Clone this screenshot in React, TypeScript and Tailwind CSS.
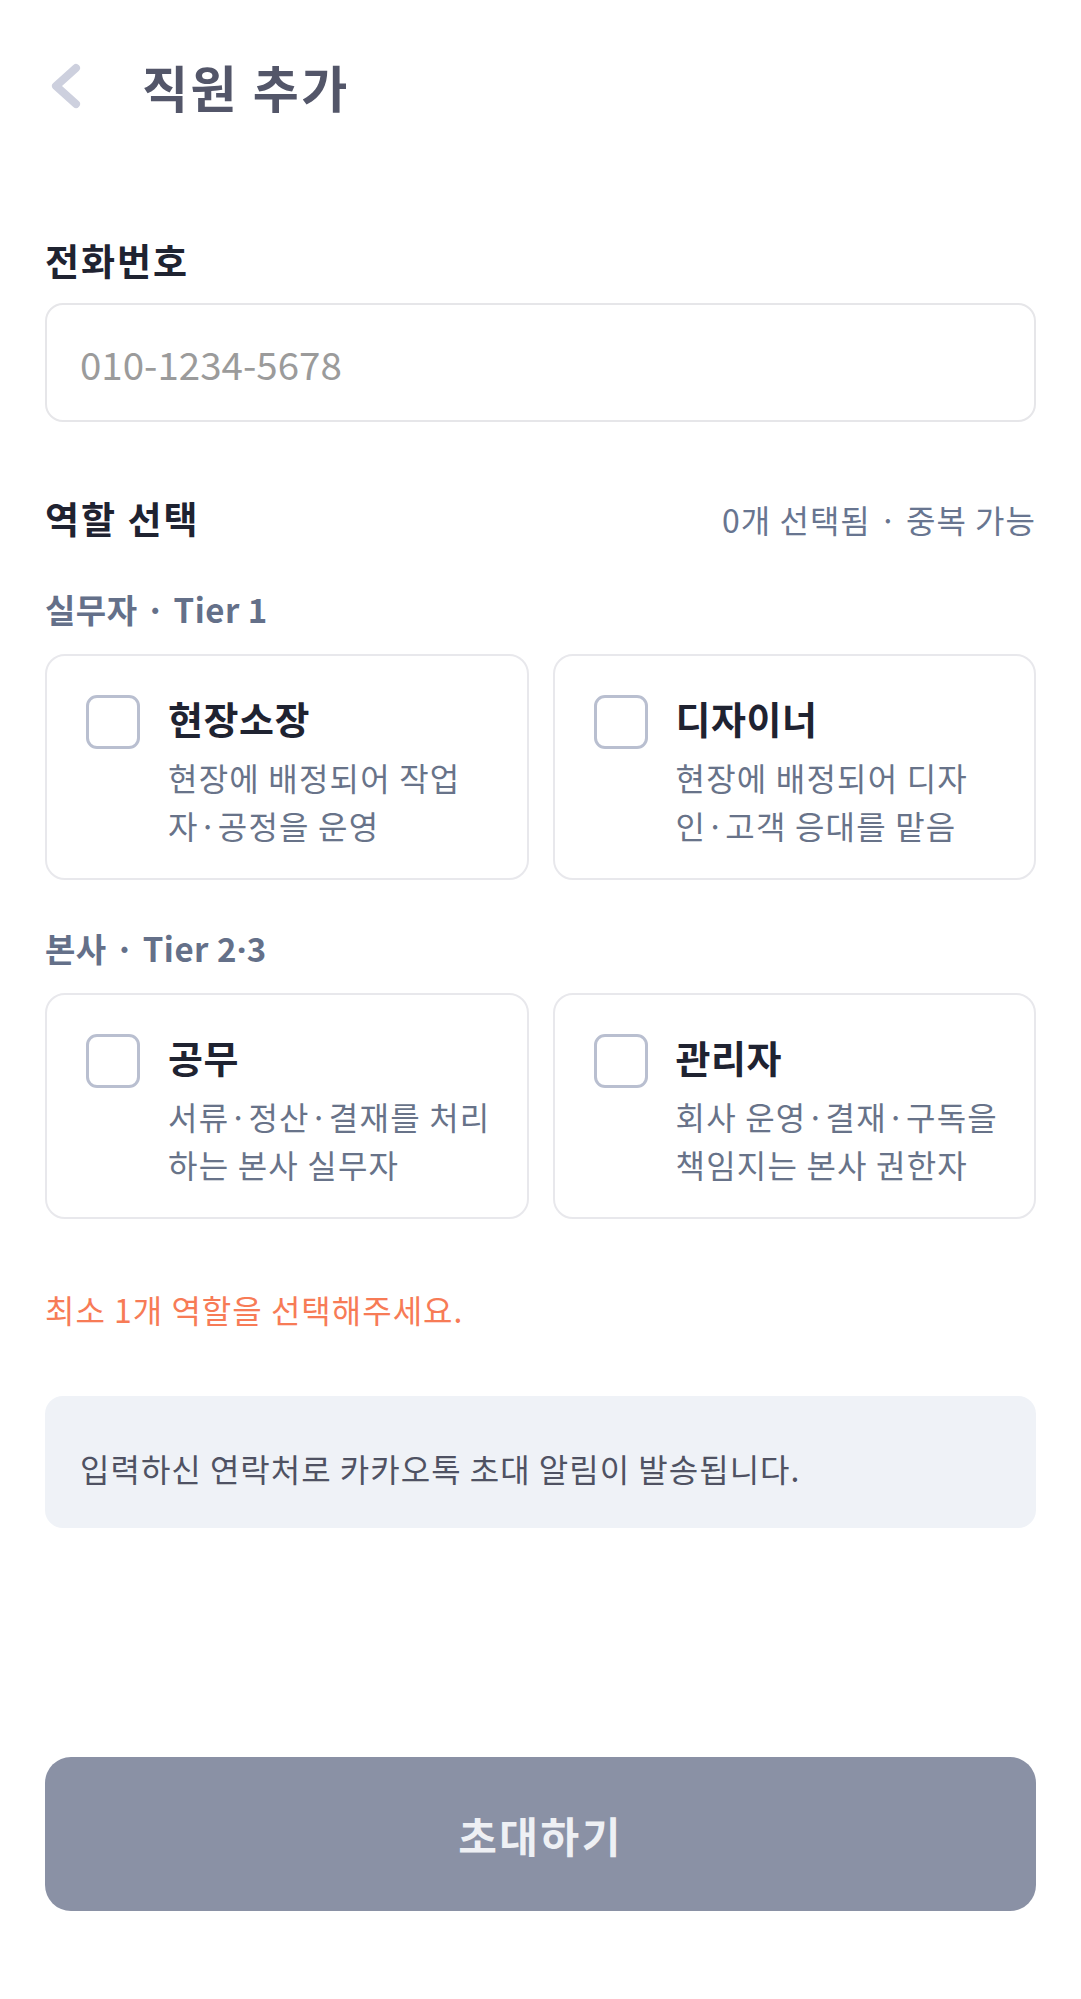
import React from "react";

type Role = { title: string; lines: [string, string] };

const tier1: Role[] = [
  { title: "현장소장", lines: ["현장에 배정되어 작업", "자·공정을 운영"] },
  { title: "디자이너", lines: ["현장에 배정되어 디자", "인·고객 응대를 맡음"] },
];
const tier2: Role[] = [
  { title: "공무", lines: ["서류·정산·결재를 처리", "하는 본사 실무자"] },
  { title: "관리자", lines: ["회사 운영·결재·구독을", "책임지는 본사 권한자"] },
];

function RoleCard({ role }: { role: Role }) {
  return (
    <button
      type="button"
      className="flex items-start text-left rounded-[20px] border-2 border-[#e8e8ec] bg-white pt-[39px] pl-[39px] pr-[20px] pb-[29px]"
    >
      <span className="shrink-0 w-[54px] h-[54px] rounded-[11px] border-[3px] border-[#b9bfd0] bg-white" />
      <span className="ml-[28px] flex flex-col">
        <span className="h-[46px] leading-[46px] text-[38px] tracking-[0.5px] font-bold text-[#1f2331]">{role.title}</span>
        <span className="mt-[12px] flex flex-col text-[32px] tracking-[1.2px] leading-[48px] text-[#687389] whitespace-nowrap">
          <span>{role.lines[0]}</span>
          <span>{role.lines[1]}</span>
        </span>
      </span>
    </button>
  );
}

export default function App() {
  return (
    <div className="min-h-[1999px] w-full bg-white flex flex-col px-[45px] font-['Noto_Sans_CJK_KR','Noto_Sans',sans-serif]">
      {/* Header */}
      <div className="h-[172px] flex items-center">
        <svg width="40" height="60" viewBox="0 0 40 60" className="shrink-0">
          <polyline
            points="31,12 11,30 31,48"
            fill="none"
            stroke="#cdd0de"
            strokeWidth="8"
            strokeLinecap="round"
            strokeLinejoin="round"
          />
        </svg>
        <h1 className="ml-[57px] text-[50px] tracking-[2.5px] leading-none font-bold text-[#535669]">직원 추가</h1>
      </div>

      {/* Phone */}
      <div className="mt-[62px] h-[52px] leading-[52px] text-[37px] tracking-[2px] font-bold text-[#1f2331]">전화번호</div>
      <input
        type="text"
        placeholder="010-1234-5678"
        className="mt-[17px] h-[119px] w-full rounded-[18px] border-2 border-[#e6e6e9] pl-[33px] text-[38.5px] text-[#1f2331] placeholder:text-[#9b9b9b] outline-none"
      />

      {/* Role selection */}
      <div className="mt-[71px] h-[52px] flex items-center justify-between">
        <span className="text-[37px] tracking-[2px] font-bold text-[#1f2331]">역할 선택</span>
        <span className="text-[32px] tracking-[1px] text-[#687590]">0개 선택됨 · 중복 가능</span>
      </div>

      <div className="mt-[40px] h-[48px] leading-[48px] text-[33px] tracking-[0.5px] font-bold text-[#647089]">실무자 · Tier 1</div>
      <div className="mt-[21px] grid grid-cols-2 gap-[24px]">
        {tier1.map((r) => (
          <RoleCard key={r.title} role={r} />
        ))}
      </div>

      <div className="mt-[44px] h-[48px] leading-[48px] text-[33px] tracking-[0.5px] font-bold text-[#647089]">
        본사 · Tier 2<span className="font-['Noto_Sans',sans-serif]">·</span>3
      </div>
      <div className="mt-[21px] grid grid-cols-2 gap-[24px]">
        {tier2.map((r) => (
          <RoleCard key={r.title} role={r} />
        ))}
      </div>

      <p className="mt-[67px] h-[46px] leading-[46px] text-[32px] tracking-[1px] text-[#f77b56]">최소 1개 역할을 선택해주세요.</p>

      <div className="mt-[64px] rounded-[18px] bg-[#eff2f7] pl-[35px] pt-[49px] pb-[37px]">
        <p className="h-[46px] leading-[46px] text-[32px] tracking-[1px] text-[#4f5263]">입력하신 연락처로 카카오톡 초대 알림이 발송됩니다.</p>
      </div>

      <button
        type="button"
        className="mt-auto mb-[88px] h-[154px] w-full rounded-[26px] bg-[#8a91a5] text-[42px] tracking-[2.5px] font-bold text-[#eef0f4]"
      >
        초대하기
      </button>
    </div>
  );
}
